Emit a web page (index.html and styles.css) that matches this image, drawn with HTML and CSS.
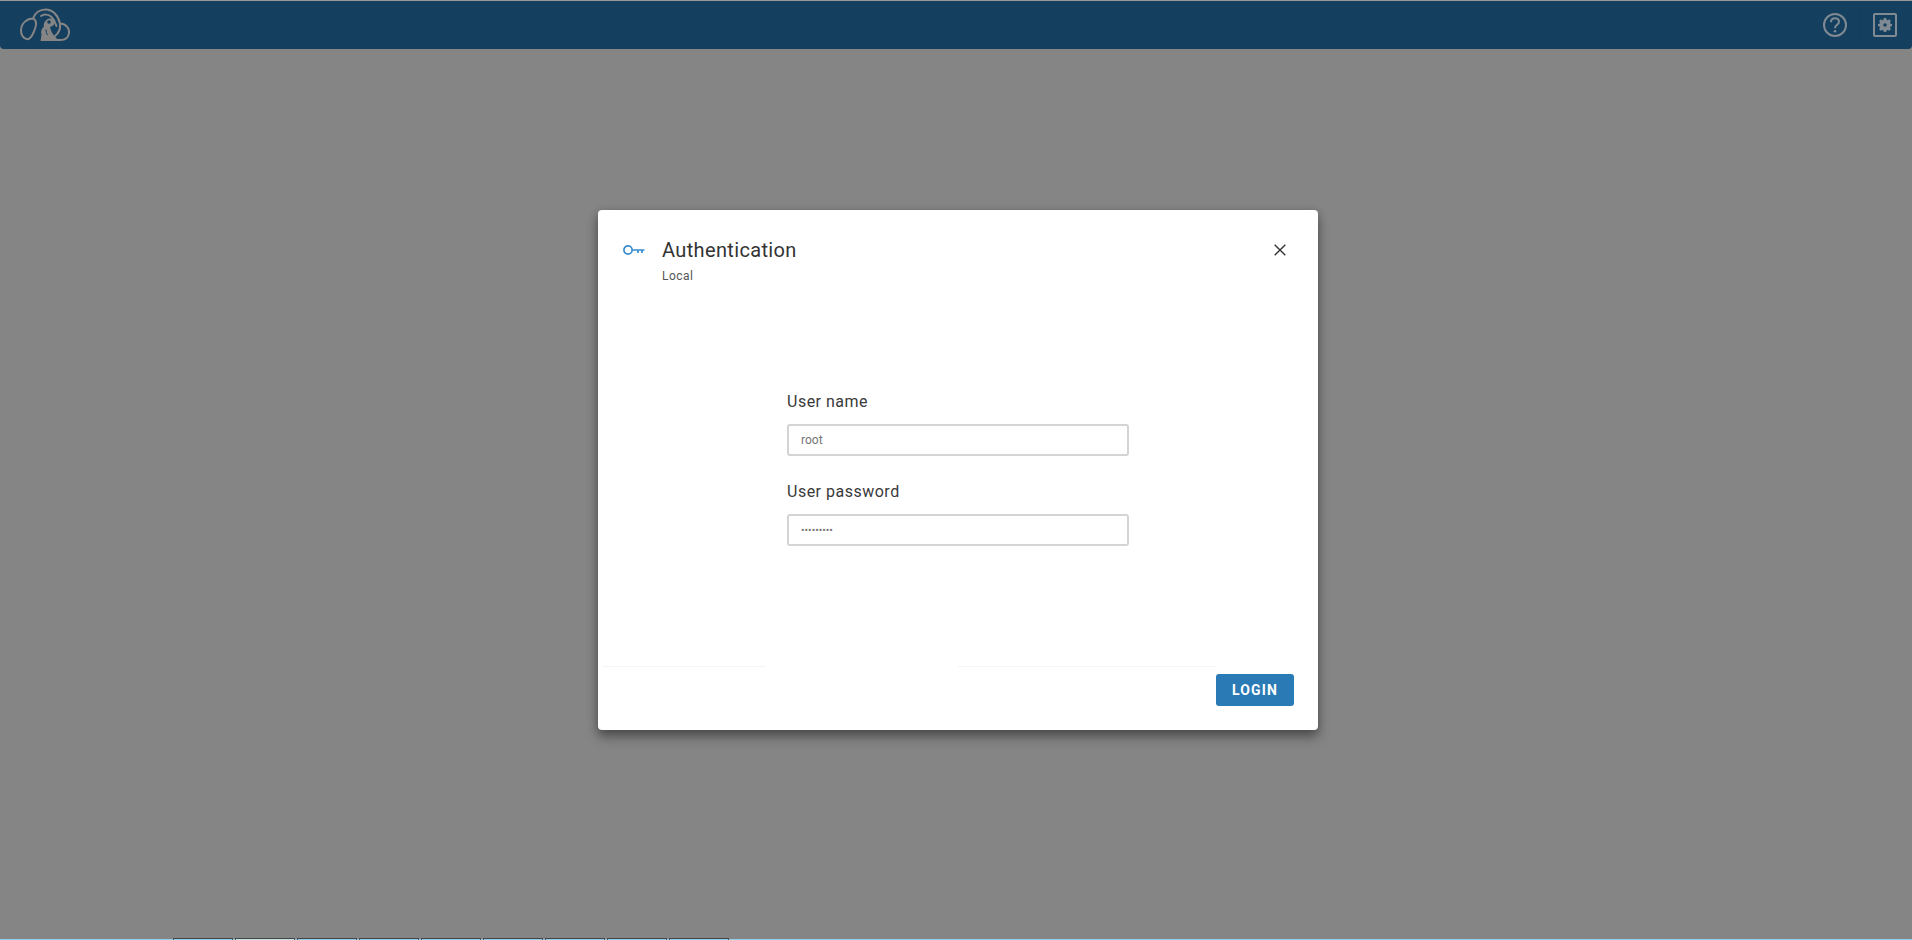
FILE: index.html
```html
<!DOCTYPE html>
<html lang="en">
<head>
<meta charset="utf-8">
<title>Authentication</title>
<link rel="stylesheet" href="styles.css">
</head>
<body>
<div class="page">
  <header class="topbar">
    <svg class="logo" viewBox="0 0 52 34" width="52" height="34" fill="none">
      <path class="logo-line" d="M14 10.500C8 10.500 2.500 15 2 22C1.800 27 4.500 31 8.500 31.200C11.500 31.200 13 28 14.500 24.500C16 21 17.500 18 17 14.500C16.500 12 15.500 11 14 10.500C16 5 21 1.500 26.500 1.500C33.500 1.500 39 7 41 15.500C46.500 15.500 50.500 20 50 25C49.500 29.500 46 32 41.500 32L25 32"/>
      <path class="logo-line" d="M22 8C25 6 29.500 6 32.500 9C35 11.500 36.500 14.500 37.500 18"/>
      <path class="logo-line" d="M41 15.500C41.500 20 40 25 36 28"/>
      <path class="logo-fill" d="M21.500 33L22.500 27C21.500 23.500 22.500 20.500 25 18.500C24 15.500 26.500 11.500 30 10.500C32.500 10 35 11.500 35.500 14C36 16.500 33.500 18.500 31 19C31.500 22.500 33.500 26 36 28.500L38.500 31.500L37 33Z"/>
      <circle class="logo-eye" cx="30" cy="14" r="1.800"/>
      <path class="logo-eye-line" d="M27 21.500C27 23.500 27.500 25.500 28.500 27"/>
    </svg>
    <div class="actions">
      <span class="action">
        <svg viewBox="0 0 26 26" width="26" height="26" fill="none">
          <circle class="action-line" cx="13" cy="13" r="11"/>
          <path class="action-line" d="M9 10.200C9 7.800 10.800 6.300 13 6.300C15.300 6.300 17 7.800 17 9.800C17 12.700 13 13 13 16.200"/>
          <circle class="action-dot" cx="13" cy="19.300" r="1.300"/>
        </svg>
      </span>
      <span class="divider"></span>
      <span class="action">
        <svg viewBox="0 0 24 24" width="24" height="24" fill="none">
          <rect class="action-line" x="1" y="1" width="22" height="22" rx="1"/>
          <path class="action-dot" fill-rule="evenodd" d="M10.800 6H13.200L13.600 7.700L14.800 8.200L16.300 7.300L17.900 9L17 10.500L17.500 11.700L19 12.100V14.100L17.500 14.500L17 15.700L17.900 17.200L16.300 18.800L14.800 17.900L13.600 18.400L13.200 20H10.800L10.400 18.400L9.200 17.900L7.700 18.800L6.100 17.200L7 15.700L6.500 14.500L5 14.100V12.100L6.500 11.700L7 10.500L6.100 9L7.700 7.300L9.200 8.200L10.400 7.700ZM12 11.300A1.700 1.700 0 1 0 12 14.700A1.700 1.700 0 1 0 12 11.300Z" transform="translate(0 -1)"/>
        </svg>
      </span>
    </div>
  </header>
  <main class="backdrop">
    <section class="dialog">
      <div class="dialog-head">
        <svg class="key" viewBox="0 0 22 10" width="22" height="10" fill="none">
          <circle cx="5" cy="5" r="4.100"/>
          <path d="M9 5H21.500M15 5V8M19 5V8"/>
        </svg>
        <div class="titles">
          <h1 class="title">Authentication</h1>
          <div class="subtitle">Local</div>
        </div>
        <svg class="close" viewBox="0 0 12 12" width="12" height="12" fill="none">
          <path d="M0.700 0.700L11.300 11.300M11.300 0.700L0.700 11.300"/>
        </svg>
      </div>
      <form class="form">
        <label class="label" for="user">User name</label>
        <input class="field" id="user" type="text" value="root">
        <label class="label label-second" for="pass">User password</label>
        <input class="field field-secret" id="pass" type="password" value="password1">
      </form>
      <div class="rule">
        <span class="rule-seg rule-left"></span>
        <span class="rule-gap"></span>
        <span class="rule-seg rule-right"></span>
      </div>
      <div class="dialog-foot">
        <button class="login" type="button">LOGIN</button>
      </div>
    </section>
  </main>
  <footer class="strip">
    <span class="tab"></span>
    <span class="tab tab-active"></span>
    <span class="tab"></span>
    <span class="tab"></span>
    <span class="tab"></span>
    <span class="tab"></span>
    <span class="tab"></span>
    <span class="tab"></span>
    <span class="tab"></span>
  </footer>
</div>
</body>
</html>
```

FILE: styles.css
```css
* { box-sizing: border-box; }
html, body { margin: 0; height: 100%; overflow: hidden; }
body { font-family: Roboto, "Liberation Sans", sans-serif; background: #858585; }
.page { height: 940px; display: flex; flex-direction: column; }
.topbar {
  height: 49px;
  flex: none;
  background: #143f5f;
  border-top: 1px solid #999;
  border-bottom-left-radius: 4px;
  border-bottom-right-radius: 4px;
  display: flex;
  align-items: center;
  justify-content: space-between;
  padding: 0 15px 0 19px;
}
.logo-line { stroke: #858585; stroke-width: 2; stroke-linecap: round; }
.logo-fill { fill: #858585; }
.logo-eye { fill: #143f5f; }
.logo-eye-line { stroke: #143f5f; stroke-width: 1; }
.actions { display: flex; align-items: center; gap: 12px; }
.action { display: flex; }
.divider { width: 1px; height: 30px; background: #173a55; }
.action-line { stroke: #7f8a92; stroke-width: 2; }
.action-dot { fill: #7f8a92; }
.backdrop { flex: 1; min-height: 0; background: #858585; padding: 161px 0 0 598px; }
.dialog {
  width: 720px;
  height: 520px;
  background: #fff;
  border-radius: 4px;
  box-shadow: 0 8px 12px rgba(0, 0, 0, .3), 0 2px 8px rgba(0, 0, 0, .25);
  display: flex;
  flex-direction: column;
}
.dialog-head { height: 73px; flex: none; display: flex; align-items: flex-start; padding: 19px 32px 0 25px; color: #333; }
.key { margin-top: 16px; stroke: #3a8dd0; flex: none; }
.key circle, .key path { stroke-width: 1.700; }
.titles { margin-left: 17px; flex: 1; padding-top: 8px; }
.title { margin: 0; font-size: 20px; line-height: 26px; font-weight: 400; letter-spacing: .35px; color: #333; }
.subtitle { margin-top: 6px; font-size: 12px; line-height: 14px; letter-spacing: .5px; color: #555; }
.close { margin-top: 15px; stroke: #333; stroke-width: 1.400; flex: none; }
.form { height: 383px; flex: none; padding: 109px 0 0 189px; display: flex; flex-direction: column; align-items: flex-start; }
.label { font-size: 16px; line-height: 20px; letter-spacing: .5px; font-weight: 400; color: #3a3a3a; height: 20px; }
.label-second { margin-top: 26px; }
.field {
  margin-top: 12px;
  width: 342px;
  height: 32px;
  border: 2px solid #d4d4d4;
  border-radius: 3px;
  padding: 0 12px;
  background: #fff;
  font: 12px Roboto, "Liberation Sans", sans-serif;
  color: #757575;
  outline: none;
}
.field-secret { font-size: 10.500px; }
.rule { flex: none; height: 1px; display: flex; padding: 0 102px 0 4px; }
.rule-seg { height: 1px; background: #f5f5f5; }
.rule-left { width: 164px; }
.rule-gap { width: 192px; }
.rule-right { flex: 1; }
.dialog-foot { flex: 1; display: flex; justify-content: flex-end; padding: 7px 24px 0 0; }
.login {
  width: 78px;
  height: 32px;
  border: 0;
  border-radius: 3px;
  background: #2a7ab5;
  color: #fff;
  font: 700 14px Roboto, "Liberation Sans", sans-serif;
  letter-spacing: 1.100px;
  padding: 0 0 1px;
}
.strip { flex: none; height: 2px; border-bottom: 1px solid #8fd0ea; display: flex; gap: 2px; padding-left: 173px; }
.tab { width: 60px; height: 2px; background: #8fd0ea; border-top: 1px solid #444; border-left: 1px solid #555; border-right: 1px solid #555; }
.tab-active { background: #c5e5e5; }
```
